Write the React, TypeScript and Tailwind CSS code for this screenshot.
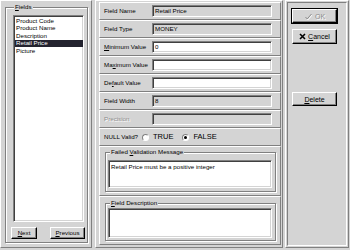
const raised = "border border-t-white border-l-white border-r-[#808080] border-b-[#808080]";
const sunken =
  "border border-t-[#808080] border-l-[#808080] border-r-white border-b-white shadow-[inset_1px_1px_0_#404040,inset_-1px_-1px_0_#d4d4d4]";
const etched = "border border-[#808080] shadow-[inset_1px_1px_0_#fff,1px_1px_0_#fff]";
const btn =
  "flex items-center justify-center border border-t-white border-l-white border-r-black border-b-black shadow-[inset_-1px_-1px_0_#808080] bg-[#d4d4d4]";
const greyText = "text-[#8c8c8c] [text-shadow:1px_1px_0_#fff]";

const fields = ["Product Code", "Product Name", "Description", "Retail Price", "Picture"];

function Row({
  label,
  value,
  white,
  disabled,
}: {
  label: React.ReactNode;
  value?: string;
  white?: boolean;
  disabled?: boolean;
}) {
  return (
    <div className={`h-[18px] w-[182px] ${raised} flex items-center pl-[4px]`}>
      <span className={`w-[48px] whitespace-nowrap ${disabled ? greyText : ""}`}>{label}</span>
      <div
        className={`h-[12px] w-[120px] ${sunken} ${white ? "bg-white" : "bg-[#d4d4d4]"} flex items-center pl-[2px]`}
      >
        {value}
      </div>
    </div>
  );
}

function Radio({ checked, label }: { checked?: boolean; label: string }) {
  return (
    <div className="flex items-center gap-[4px]">
      <span className="flex h-[7px] w-[7px] items-center justify-center rounded-full border border-t-[#808080] border-l-[#808080] border-r-white border-b-white bg-white">
        {checked && <span className="h-[3px] w-[3px] rounded-full bg-black" />}
      </span>
      <span className="text-[7.5px]">{label}</span>
    </div>
  );
}

export default function App() {
  return (
    <div className="flex h-[250px] w-[350px] bg-[#d4d4d4] font-['Liberation_Sans',Arial,sans-serif] text-[6.2px] leading-none text-black">
      {/* Fields list pane */}
      <div className={`h-[248px] w-[92px] ${raised} pl-[4px] pt-[6px]`}>
        <div className={`relative h-[236px] w-[83px] ${etched} pl-[7px] pt-[7px]`}>
          <span className="absolute left-[8px] top-[-4px] bg-[#d4d4d4] px-[1px]">
            <u>F</u>ields
          </span>
          <div className={`h-[207px] w-[71px] ${sunken} bg-white pt-[1px] pl-[1px]`}>
            {fields.map((f) => (
              <div
                key={f}
                className={`flex h-[7.5px] w-[68px] items-center pl-[1px] ${
                  f === "Retail Price" ? "bg-[#23232f] text-white" : ""
                }`}
              >
                {f}
              </div>
            ))}
          </div>
          <div className="ml-[-2px] mt-[5px] flex gap-[13px]">
            <div className={`${btn} h-[12px] w-[26px]`}>
              <u>N</u>ext
            </div>
            <div className={`${btn} h-[12px] w-[35px]`}>
              <u>P</u>revious
            </div>
          </div>
        </div>
      </div>

      {/* Field properties pane */}
      <div className={`ml-[3px] h-[248px] w-[188px] ${raised} pl-[3px] pt-[1px]`}>
        <Row label="Field Name" value="Retail Price" />
        <Row label="Field Type" value="MONEY" />
        <Row
          label={
            <>
              <u>M</u>inimum Value
            </>
          }
          value="0"
          white
        />
        <Row
          label={
            <>
              Ma<u>x</u>imum Value
            </>
          }
          white
        />
        <Row
          label={
            <>
              De<u>f</u>ault Value
            </>
          }
          white
        />
        <Row label="Field Width" value="8" />
        <Row label="Precision" disabled />
        <div className={`flex h-[18px] w-[182px] items-center ${raised} pl-[4px]`}>
          <span className="w-[38px]">NULL Valid?</span>
          <Radio label="TRUE" />
          <div className="ml-[9px]">
            <Radio checked label="FALSE" />
          </div>
        </div>
        <div className={`h-[50px] w-[182px] ${raised} pl-[5px] pt-[5px]`}>
          <div className={`relative h-[40px] w-[171px] ${etched} pl-[2px] pt-[7px]`}>
            <span className="absolute left-[4px] top-[-4px] bg-[#d4d4d4] px-[1px]">
              Failed <u>V</u>alidation Message
            </span>
            <div className={`h-[28px] w-[164px] ${sunken} bg-white pl-[2px] pt-[3px]`}>
              Retail Price must be a positive integer
            </div>
          </div>
        </div>
        <div className={`h-[49px] w-[182px] ${raised} pl-[5px] pt-[6px]`}>
          <div className={`relative h-[38px] w-[171px] ${etched} pl-[2px] pt-[4px]`}>
            <span className="absolute left-[4px] top-[-4px] bg-[#d4d4d4] px-[1px]">
              <u>F</u>ield Description
            </span>
            <div className={`h-[30px] w-[164px] ${sunken} bg-white`} />
          </div>
        </div>
      </div>

      {/* Buttons pane */}
      <div className={`ml-[2px] h-[248px] w-[64px] ${raised} p-[1px]`}>
        <div className="h-full w-full border border-t-[#808080] border-l-[#808080] border-r-white border-b-white pl-[4px] pt-[6px]">
          <div className={`${btn} h-[14px] w-[45px] gap-[3px] ring-1 ring-black`}>
            <svg width="8" height="7" viewBox="0 0 8 7">
              <path d="M1.5 4 L3.2 6 L7.5 1" fill="none" stroke="#fff" strokeWidth="1" transform="translate(0.8 0.8)" />
              <path d="M1.5 4 L3.2 6 L7.5 1" fill="none" stroke="#8c8c8c" strokeWidth="1" />
            </svg>
            <span className={`text-[7px] ${greyText}`}>OK</span>
          </div>
          <div className={`${btn} mt-[6px] h-[15px] w-[45px] gap-[2px]`}>
            <svg width="7" height="7" viewBox="0 0 7 7">
              <path d="M1 1 L6 6 M6 1 L1 6" stroke="#000" strokeWidth="1.6" />
            </svg>
            <span className="text-[7px]">
              <u>C</u>ancel
            </span>
          </div>
          <div className={`${btn} mt-[48px] h-[14px] w-[45px]`}>
            <span className="text-[7px]">
              <u>D</u>elete
            </span>
          </div>
        </div>
      </div>
    </div>
  );
}
